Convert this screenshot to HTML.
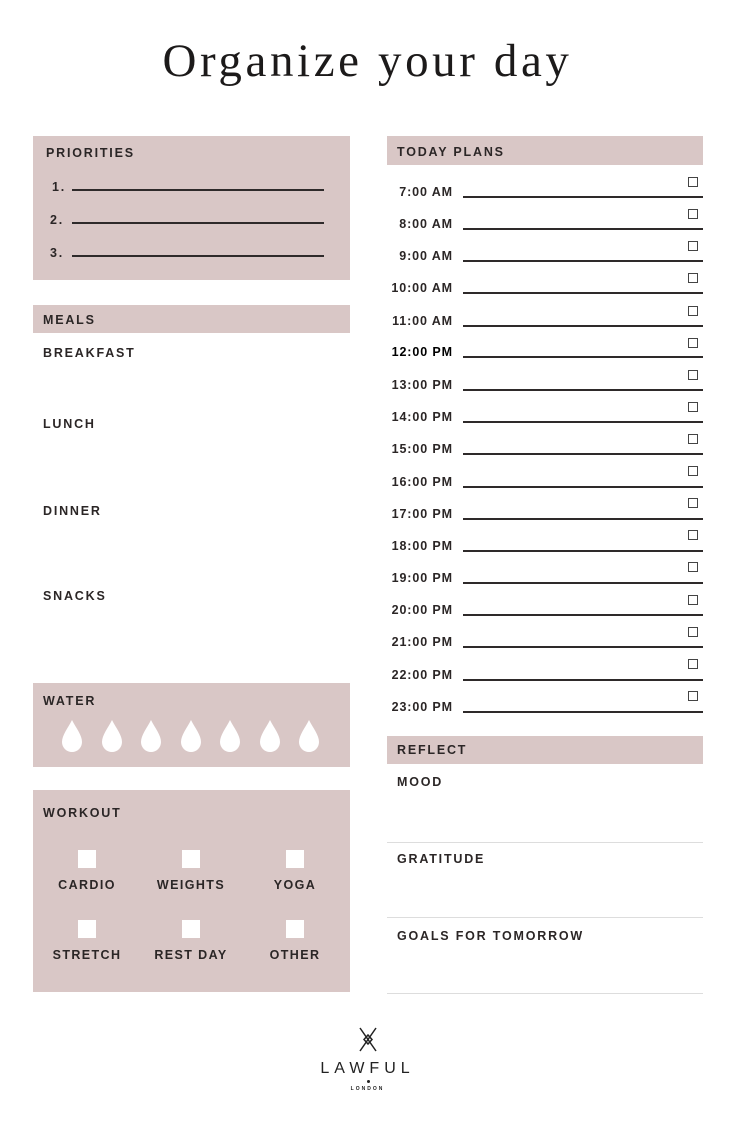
<!DOCTYPE html>
<html><head><style>
body{margin:0;width:735px;height:1129px;background:#fff;position:relative;font-family:"Liberation Sans",sans-serif;color:#2b2626;overflow:hidden}
.a{position:absolute}
.pk{background:#d9c7c6}
.lb{font-weight:bold;font-size:12.5px;letter-spacing:1.8px}
.ln{position:absolute;height:2px;background:#2e2a2a}
.t{position:absolute;font-weight:bold;font-size:12.5px;letter-spacing:0.9px;text-align:right;width:72px;left:381px}
.cb{position:absolute;width:8px;height:8px;border:1.5px solid #444;left:688px}
.wb{position:absolute;width:18px;height:18px;background:#fff}
.wl{position:absolute;width:100px;text-align:center;font-weight:bold;font-size:12.5px;letter-spacing:1.4px}
.gl{position:absolute;left:387px;width:316px;height:1px;background:#ddd}
</style></head><body>
<div class="a" style="left:0;width:735px;top:34px;text-align:center;font-family:'Liberation Serif',serif;font-size:47px;letter-spacing:3.6px;color:#1c1a1a">Organize your day</div>

<div class="a pk" style="left:33px;top:136px;width:317px;height:144px"></div>
<div class="a lb" style="left:46px;top:146px">PRIORITIES</div>
<div class="a lb" style="left:52px;top:180px">1.</div><div class="ln" style="left:72px;top:189px;width:252px"></div>
<div class="a lb" style="left:50px;top:213px">2.</div><div class="ln" style="left:72px;top:222px;width:252px"></div>
<div class="a lb" style="left:50px;top:246px">3.</div><div class="ln" style="left:72px;top:255px;width:252px"></div>

<div class="a pk" style="left:33px;top:305px;width:317px;height:28px"></div>
<div class="a lb" style="left:43px;top:313px">MEALS</div>
<div class="a lb" style="left:43px;top:346px">BREAKFAST</div>
<div class="a lb" style="left:43px;top:417px">LUNCH</div>
<div class="a lb" style="left:43px;top:504px">DINNER</div>
<div class="a lb" style="left:43px;top:589px">SNACKS</div>

<div class="a pk" style="left:33px;top:683px;width:317px;height:84px"></div>
<div class="a lb" style="left:43px;top:694px">WATER</div>
<svg class="a" style="left:33px;top:683px" width="317" height="84">
<g fill="#fff">
<path id="d" d="M39 37 C35 45 29 52 29 59 A10 10 0 0 0 49 59 C49 52 43 45 39 37Z"/>
<use href="#d" x="40"/><use href="#d" x="79"/><use href="#d" x="119"/><use href="#d" x="158"/><use href="#d" x="198"/><use href="#d" x="237"/>
</g></svg>

<div class="a pk" style="left:33px;top:790px;width:317px;height:202px"></div>
<div class="a lb" style="left:43px;top:806px">WORKOUT</div>
<div class="wb" style="left:78px;top:850px"></div><div class="wb" style="left:182px;top:850px"></div><div class="wb" style="left:286px;top:850px"></div>
<div class="wl" style="left:37px;top:878px">CARDIO</div><div class="wl" style="left:141px;top:878px">WEIGHTS</div><div class="wl" style="left:245px;top:878px">YOGA</div>
<div class="wb" style="left:78px;top:920px"></div><div class="wb" style="left:182px;top:920px"></div><div class="wb" style="left:286px;top:920px"></div>
<div class="wl" style="left:37px;top:948px">STRETCH</div><div class="wl" style="left:141px;top:948px">REST DAY</div><div class="wl" style="left:245px;top:948px">OTHER</div>

<div class="a pk" style="left:387px;top:136px;width:316px;height:29px"></div>
<div class="a lb" style="left:397px;top:145px">TODAY PLANS</div>

<div class="t" style="top:185px">7:00 AM</div><div class="ln" style="left:463px;top:196px;width:240px"></div><div class="cb" style="top:177px"></div>
<div class="t" style="top:217px">8:00 AM</div><div class="ln" style="left:463px;top:228px;width:240px"></div><div class="cb" style="top:209px"></div>
<div class="t" style="top:249px">9:00 AM</div><div class="ln" style="left:463px;top:260px;width:240px"></div><div class="cb" style="top:241px"></div>
<div class="t" style="top:281px">10:00 AM</div><div class="ln" style="left:463px;top:292px;width:240px"></div><div class="cb" style="top:273px"></div>
<div class="t" style="top:314px">11:00 AM</div><div class="ln" style="left:463px;top:325px;width:240px"></div><div class="cb" style="top:306px"></div>
<div class="t" style="top:345px;color:#000">12:00 PM</div><div class="ln" style="left:463px;top:356px;width:240px"></div><div class="cb" style="top:338px"></div>
<div class="t" style="top:378px">13:00 PM</div><div class="ln" style="left:463px;top:389px;width:240px"></div><div class="cb" style="top:370px"></div>
<div class="t" style="top:410px">14:00 PM</div><div class="ln" style="left:463px;top:421px;width:240px"></div><div class="cb" style="top:402px"></div>
<div class="t" style="top:442px">15:00 PM</div><div class="ln" style="left:463px;top:453px;width:240px"></div><div class="cb" style="top:434px"></div>
<div class="t" style="top:475px">16:00 PM</div><div class="ln" style="left:463px;top:486px;width:240px"></div><div class="cb" style="top:466px"></div>
<div class="t" style="top:507px">17:00 PM</div><div class="ln" style="left:463px;top:518px;width:240px"></div><div class="cb" style="top:498px"></div>
<div class="t" style="top:539px">18:00 PM</div><div class="ln" style="left:463px;top:550px;width:240px"></div><div class="cb" style="top:530px"></div>
<div class="t" style="top:571px">19:00 PM</div><div class="ln" style="left:463px;top:582px;width:240px"></div><div class="cb" style="top:562px"></div>
<div class="t" style="top:603px">20:00 PM</div><div class="ln" style="left:463px;top:614px;width:240px"></div><div class="cb" style="top:595px"></div>
<div class="t" style="top:635px">21:00 PM</div><div class="ln" style="left:463px;top:646px;width:240px"></div><div class="cb" style="top:627px"></div>
<div class="t" style="top:668px">22:00 PM</div><div class="ln" style="left:463px;top:679px;width:240px"></div><div class="cb" style="top:659px"></div>
<div class="t" style="top:700px">23:00 PM</div><div class="ln" style="left:463px;top:711px;width:240px"></div><div class="cb" style="top:691px"></div>

<div class="a pk" style="left:387px;top:736px;width:316px;height:28px"></div>
<div class="a lb" style="left:397px;top:743px">REFLECT</div>
<div class="a lb" style="left:397px;top:775px">MOOD</div>
<div class="gl" style="top:842px"></div>
<div class="a lb" style="left:397px;top:852px">GRATITUDE</div>
<div class="gl" style="top:917px"></div>
<div class="a lb" style="left:397px;top:929px">GOALS FOR TOMORROW</div>
<div class="gl" style="top:993px"></div>

<svg class="a" style="left:357px;top:1027px" width="22" height="26"><g stroke="#222" stroke-width="1.5" fill="none"><path d="M3 1 L19 24 M19 1 L3 24"/><path d="M11 8 L15 12.5 L11 17 L7 12.5Z"/></g></svg>
<div class="a" style="left:0;width:735px;top:1060px;text-align:center;font-size:16px;letter-spacing:5px;color:#222">LAWFUL</div>
<div class="a" style="left:367px;top:1080px;width:3px;height:3px;background:#222;border-radius:50%"></div>
<div class="a" style="left:0;width:735px;top:1086px;text-align:center;font-size:5px;font-weight:bold;letter-spacing:2px;color:#222">LONDON</div>
</body></html>
